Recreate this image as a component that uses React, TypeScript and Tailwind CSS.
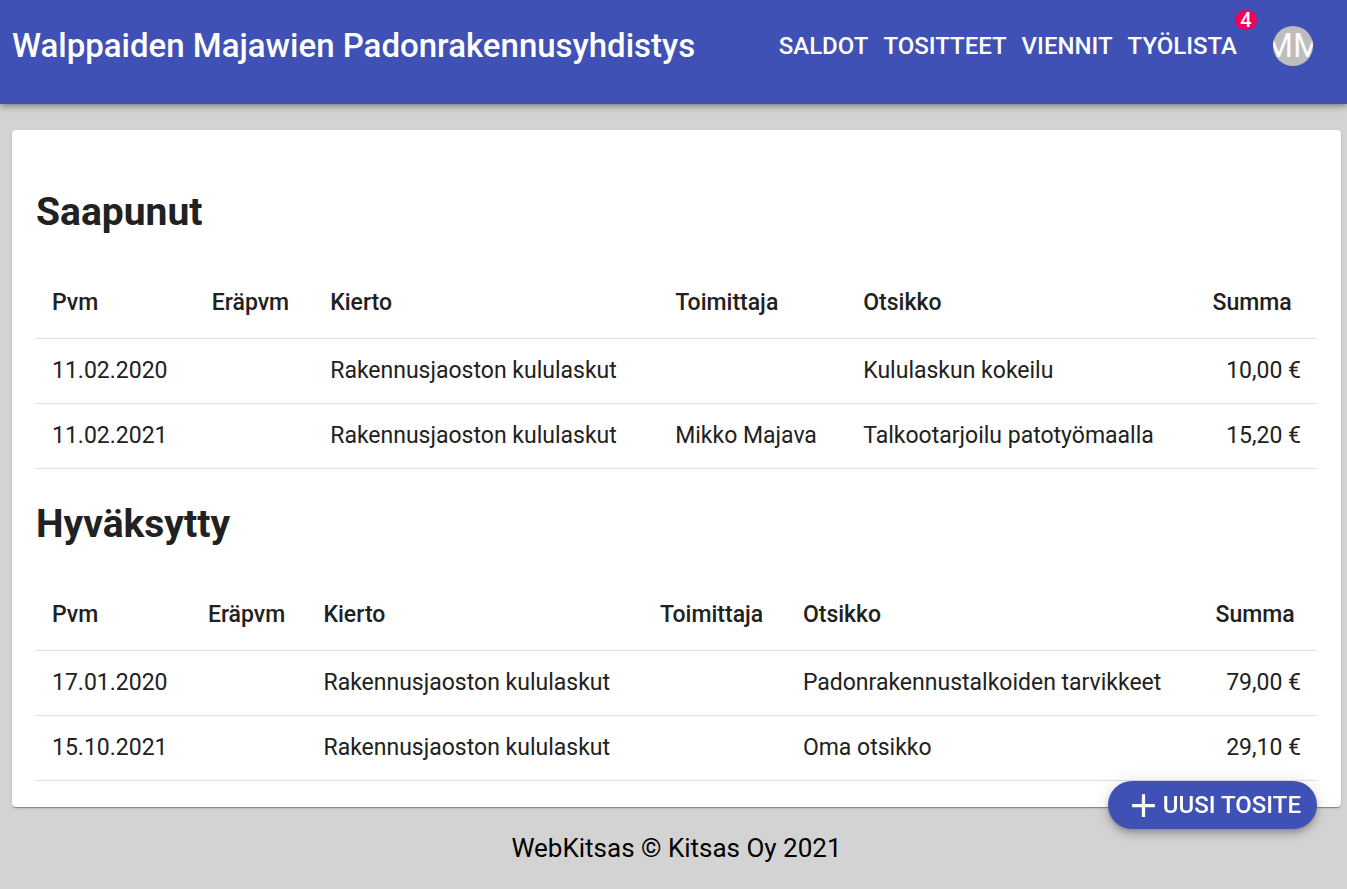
type Row = {
  pvm: string;
  erapvm: string;
  kierto: string;
  toimittaja: string;
  otsikko: string;
  summa: string;
};

const saapunut: Row[] = [
  { pvm: "11.02.2020", erapvm: "", kierto: "Rakennusjaoston kululaskut", toimittaja: "", otsikko: "Kululaskun kokeilu", summa: "10,00 €" },
  { pvm: "11.02.2021", erapvm: "", kierto: "Rakennusjaoston kululaskut", toimittaja: "Mikko Majava", otsikko: "Talkootarjoilu patotyömaalla", summa: "15,20 €" },
];

const hyvaksytty: Row[] = [
  { pvm: "17.01.2020", erapvm: "", kierto: "Rakennusjaoston kululaskut", toimittaja: "", otsikko: "Padonrakennustalkoiden tarvikkeet", summa: "79,00 €" },
  { pvm: "15.10.2021", erapvm: "", kierto: "Rakennusjaoston kululaskut", toimittaja: "", otsikko: "Oma otsikko", summa: "29,10 €" },
];

const columns = ["Pvm", "Eräpvm", "Kierto", "Toimittaja", "Otsikko", "Summa"];

function VoucherTable({ id, title, rows }: { id: string; title: string; rows: Row[] }) {
  return (
    <section aria-labelledby={id}>
      <h2 id={id} className="my-8 text-[39px] leading-[46px] font-bold">
        {title}
      </h2>
      <table aria-labelledby={id} className="w-full border-collapse text-left text-[23px]">
        <thead>
          <tr className="border-b border-[#e0e0e0]">
            {columns.map((name) => (
              <th key={name} scope="col" className="px-4 py-4 leading-[39px] font-medium">
                {name}
              </th>
            ))}
          </tr>
        </thead>
        <tbody className="leading-8">
          {rows.map((row) => (
            <tr key={row.pvm} className="border-b border-[#e0e0e0]">
              <td className="p-4">{row.pvm}</td>
              <td className="p-4">{row.erapvm}</td>
              <td className="p-4">{row.kierto}</td>
              <td className="p-4">{row.toimittaja}</td>
              <td className="p-4">{row.otsikko}</td>
              <td className="p-4 text-right">{row.summa}</td>
            </tr>
          ))}
        </tbody>
      </table>
    </section>
  );
}

const navLink = "block text-2xl leading-10 font-medium uppercase";

export default function App() {
  return (
    <div className="min-h-screen bg-[#d3d3d3] font-['Roboto',sans-serif]">
      <header className="flex items-center justify-between bg-[#3f51b5] pt-3 pr-[34px] pb-6 pl-3 text-white shadow-[0_2px_4px_-1px_rgba(0,0,0,0.2),0_4px_5px_0_rgba(0,0,0,0.14),0_1px_10px_0_rgba(0,0,0,0.12)]">
        <h1 className="text-[33px] leading-[68px] font-medium">
          Walppaiden Majawien Padonrakennusyhdistys
        </h1>
        <div className="flex items-center gap-9">
          <nav className="flex items-center gap-[15px]">
            <a href="#saldot" className={navLink}>Saldot</a>
            <a href="#tositteet" className={navLink}>Tositteet</a>
            <a href="#viennit" className={navLink}>Viennit</a>
            <span className="relative">
              <a href="#tyolista" className={navLink}>Työlista</a>
              <span className="absolute -top-4 -right-5 flex h-5 min-w-[22px] items-center justify-center rounded-full bg-[#f50057] text-[20px] leading-5 font-medium">
                4
              </span>
            </span>
          </nav>
          <button
            type="button"
            className="flex size-10 items-center justify-center overflow-hidden rounded-full bg-[#bdbdbd] text-[33px] leading-10 text-[#fafafa]"
          >
            MM
          </button>
        </div>
      </header>

      <main className="pt-[26px] pr-1.5 pl-3">
        <div className="rounded bg-white px-6 pt-[27px] pb-[26px] text-[#212121] shadow-[0_2px_1px_-1px_rgba(0,0,0,0.2),0_1px_1px_0_rgba(0,0,0,0.14),0_1px_3px_0_rgba(0,0,0,0.12)]">
          <VoucherTable id="saapunut" title="Saapunut" rows={saapunut} />
          <VoucherTable id="hyvaksytty" title="Hyväksytty" rows={hyvaksytty} />
        </div>
      </main>

      <footer className="py-[26px] pr-1.5 pl-3 text-center text-[26px] leading-[30px] text-black">
        WebKitsas © Kitsas Oy 2021
      </footer>

      <button
        type="button"
        className="fixed right-[30px] bottom-[60px] flex h-12 items-center rounded-full bg-[#3f51b5] px-4 text-2xl font-medium text-white uppercase shadow-[0_3px_5px_-1px_rgba(0,0,0,0.2),0_6px_10px_0_rgba(0,0,0,0.14),0_1px_18px_0_rgba(0,0,0,0.12)]"
      >
        <svg viewBox="0 0 24 24" className="size-[39px]" fill="currentColor" aria-hidden="true">
          <path d="M19 13h-6v6h-2v-6H5v-2h6V5h2v6h6v2z" />
        </svg>
        Uusi tosite
      </button>
    </div>
  );
}
